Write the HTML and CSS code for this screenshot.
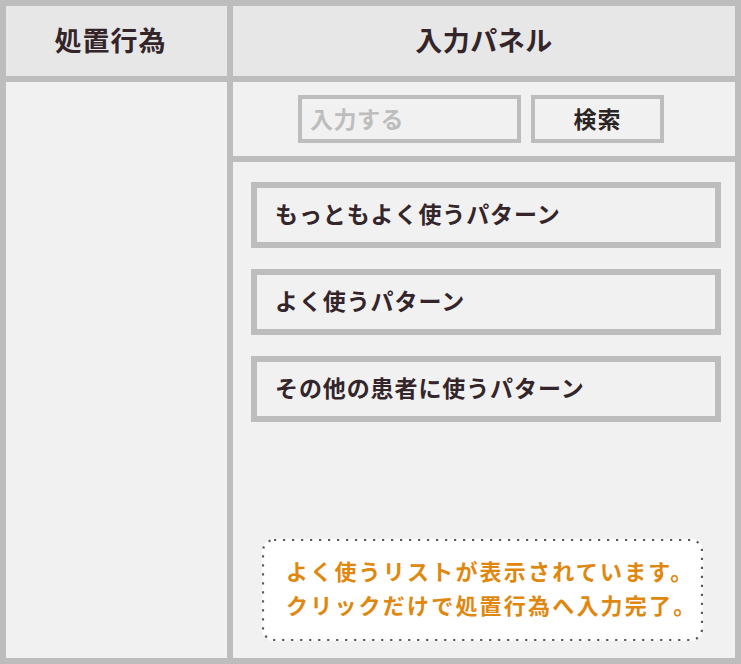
FILE: index.html
```html
<!DOCTYPE html>
<html lang="ja">
<head>
<meta charset="utf-8">
<link rel="stylesheet" href="styles.css">
</head>
<body>
<div class="frame">
  <div class="head head-left">処置行為</div>
  <div class="head">入力パネル</div>
  <div class="left-body"></div>
  <div class="right-body">
    <div class="search">
      <div class="input">入力する</div>
      <div class="button">検索</div>
    </div>
    <div class="list">
      <div class="item">もっともよく使うパターン</div>
      <div class="item">よく使うパターン</div>
      <div class="item">その他の患者に使うパターン</div>
      <div class="note">
        <svg class="note-border" width="441" height="102" viewBox="0 0 441 102"><rect x="1" y="1" width="439" height="100" rx="11" ry="11" fill="none" stroke="#595959" stroke-width="2.2" stroke-dasharray="2.2 6.8"/></svg>
        <p>よく使うリストが表示されています。</p>
        <p>クリックだけで処置行為へ入力完了。</p>
      </div>
    </div>
  </div>
</div>
</body>
</html>
```

FILE: styles.css
```css
* { box-sizing: border-box; }
html, body { margin: 0; padding: 0; }
body {
  background: #bdbdbd;
  font-family: "Noto Sans CJK JP", "Noto Sans", sans-serif;
  font-weight: 700;
  color: #33252a;
}
.frame {
  width: 741px;
  height: 664px;
  padding: 6px;
  display: grid;
  grid-template-columns: 221px 502px;
  grid-template-rows: 70px 576px;
  gap: 6px;
}
.head {
  background: #e7e7e7;
  display: flex;
  align-items: center;
  justify-content: center;
  font-size: 27px;
  letter-spacing: 0.5px;
  padding-bottom: 4px;
}
.head-left {
  padding-right: 12px;
  letter-spacing: 1px;
}
.left-body { background: #f1f1f1; }
.right-body {
  display: flex;
  flex-direction: column;
  gap: 6px;
}
.search {
  background: #f1f1f1;
  height: 74px;
  display: flex;
  align-items: center;
  gap: 10px;
  padding-left: 65px;
}
.input, .button {
  height: 48px;
  border: 4px solid #bdbdbd;
  display: flex;
  align-items: center;
  font-size: 23px;
  padding-bottom: 2px;
}
.input {
  width: 223px;
  padding-left: 8px;
  color: #bdbdbd;
  letter-spacing: 0.5px;
}
.button {
  width: 133px;
  justify-content: center;
  color: #2b2424;
  letter-spacing: 1px;
}
.list {
  flex: 1;
  background: #f1f1f1;
  display: flex;
  flex-direction: column;
  gap: 21px;
  padding: 20px 14px 17px 18px;
}
.item {
  height: 66px;
  border: 6px solid #bdbdbd;
  display: flex;
  align-items: center;
  padding-left: 18px;
  padding-bottom: 4px;
  font-size: 23px;
  letter-spacing: 0.9px;
}
.note {
  position: relative;
  margin-top: auto;
  margin-left: 11px;
  width: 441px;
  height: 102px;
  background: #ffffff;
  border-radius: 12px;
  padding: 14px 0 0 24px;
  color: #e0870f;
  font-size: 22px;
  letter-spacing: 2.2px;
}
.note p {
  margin: 0;
  line-height: 34px;
  position: relative;
  white-space: nowrap;
}
.note-border {
  position: absolute;
  left: 0;
  top: 0;
}
```
